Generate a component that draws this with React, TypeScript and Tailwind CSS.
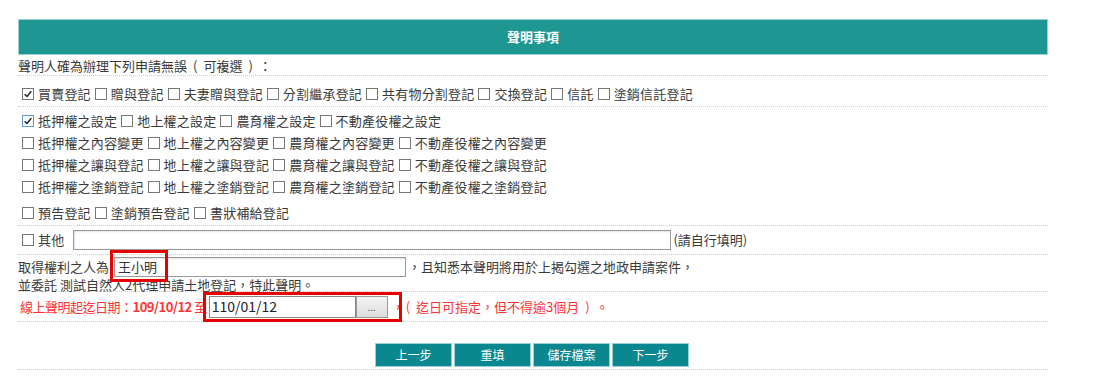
import React from "react";

const font = { fontFamily: '"Noto Sans CJK TC", "Noto Sans", sans-serif' };

const Box = ({ checked = false, focus = false }: { checked?: boolean; focus?: boolean }) => (
  <span
    className={
      "inline-flex items-center justify-center w-[12px] h-[12px] border bg-white shrink-0 " +
      (focus ? "border-[#5b9bd5]" : "border-[#777]")
    }
  >
    {checked && (
      <svg viewBox="0 0 12 12" className="w-[10px] h-[10px]">
        <path d="M2 6.2 L4.8 9 L10 2.6" fill="none" stroke="#222" strokeWidth="1.8" />
      </svg>
    )}
  </span>
);

const Item = ({ label, checked, focus }: { label: string; checked?: boolean; focus?: boolean }) => (
  <span className="inline-flex items-center gap-[4px] mr-[4px]">
    <Box checked={checked} focus={focus} />
    <span className="tracking-[0.2px]">{label}</span>
  </span>
);

const row2 = ["贈與登記", "夫妻贈與登記", "分割繼承登記", "共有物分割登記", "交換登記", "信託", "塗銷信託登記"];

const rights = ["抵押權", "地上權", "農育權", "不動產役權"];
const actions = ["之內容變更", "之讓與登記", "之塗銷登記"];

export default function App() {
  return (
    <div className="w-[1102px] h-[390px] bg-white text-[13px] text-[#3a3a3a] pt-[19px]" style={font}>
      <div className="ml-[18px] w-[1030px]">
        {/* 標題列 */}
        <div className="h-[36px] bg-[#1e9691] border border-[#9fd0dd] flex items-center justify-center text-white font-bold text-[13px]">
          聲明事項
        </div>

        <div className="h-[21px] pt-[3px] border-b border-dotted border-[#ccc] leading-[16px]">
          聲明人確為辦理下列申請無誤<span className="mx-[6px]">(</span>可複選<span className="mx-[6px]">)</span>：
        </div>

        <div className="h-[31px] pl-[4px] flex items-center border-b border-dotted border-[#ccc] pt-[6px]">
          <Item label="買賣登記" checked />
          {row2.map((l) => (
            <Item key={l} label={l} />
          ))}
        </div>

        <div className="h-[119px] pl-[4px] pt-[3px] border-b border-dotted border-[#ccc]">
          <div className="h-[22px] flex items-center">
            <Item label="抵押權之設定" checked focus />
            <Item label="地上權之設定" />
            <Item label="農育權之設定" />
            <Item label="不動產役權之設定" />
          </div>
          {actions.map((a) => (
            <div key={a} className="h-[22px] flex items-center">
              {rights.map((r) => (
                <Item key={r} label={r + a} />
              ))}
            </div>
          ))}
          <div className="h-[22px] mt-[4px] flex items-center">
            <Item label="預告登記" />
            <Item label="塗銷預告登記" />
            <Item label="書狀補給登記" />
          </div>
        </div>

        <div className="h-[29px] pl-[4px] flex items-center border-b border-dotted border-[#ccc]">
          <Item label="其他" />
          <span className="ml-[5px] w-[598px] h-[20px] border border-[#999] bg-white shadow-[inset_1px_1px_2px_rgba(0,0,0,0.12)]" />
          <span className="ml-[2px]">(請自行填明)</span>
        </div>

        <div className="h-[37px] pt-[2px] border-b border-dotted border-[#ccc] leading-[18px]">
          <div className="flex items-center h-[20px]">
            <span>取得權利之人為</span>
            <span className="relative ml-[5px]">
              <span className="flex items-center w-[292px] h-[20px] border border-[#999] px-[3px] text-[#333] bg-white shadow-[inset_1px_1px_2px_rgba(0,0,0,0.12)]">
                王小明
              </span>
              <span className="absolute -left-[4px] -top-[7px] w-[58px] h-[32px] border-[3px] border-[#e60000]" />
            </span>
            <span className="ml-[2px]">，且知悉本聲明將用於上揭勾選之地政申請案件，</span>
          </div>
          <div className="h-[16px] leading-[16px]">並委託 測試自然人2代理申請土地登記，特此聲明。</div>
        </div>

        <div className="h-[30px] pl-[2px] flex items-center border-b border-dotted border-[#ccc] text-[#f33]">
          <span className="tracking-[-0.5px]">
            線上聲明起迄日期：<span className="font-bold">109/10/12</span> 至
          </span>
          <span className="relative ml-[2px] flex items-center">
            <span className="flex items-center w-[147px] h-[22px] border border-[#888] px-[2px] text-[14px] text-[#222] bg-white">
              110/01/12
            </span>
            <span className="flex items-center justify-center w-[32px] h-[22px] border border-[#999] bg-gradient-to-b from-[#f4f4f4] to-[#dcdcdc] text-[#555] text-[10px]">
              ...
            </span>
            <span className="ml-[4px] w-[12px]">，</span>
            <span className="absolute -left-[6px] -top-[4px] w-[199px] h-[30px] border-[3px] border-[#e60000]" />
          </span>
          <span className="ml-[2px]">
            <span className="mr-[6px]">(</span>迄日可指定，但不得逾3個月<span className="mx-[6px]">)</span>。
          </span>
        </div>

        <div className="h-[48px] border-b border-dotted border-[#ccc] flex items-end justify-center pb-[2px] pr-[2px]">
          <div className="flex gap-[2px]">
            {["上一步", "重填", "儲存檔案", "下一步"].map((b) => (
              <button
                key={b}
                className="w-[77px] h-[24px] bg-[#0b8790] border border-[#9ccfd6] text-white text-[12px] flex items-center justify-center"
              >
                {b}
              </button>
            ))}
          </div>
        </div>
      </div>
    </div>
  );
}
